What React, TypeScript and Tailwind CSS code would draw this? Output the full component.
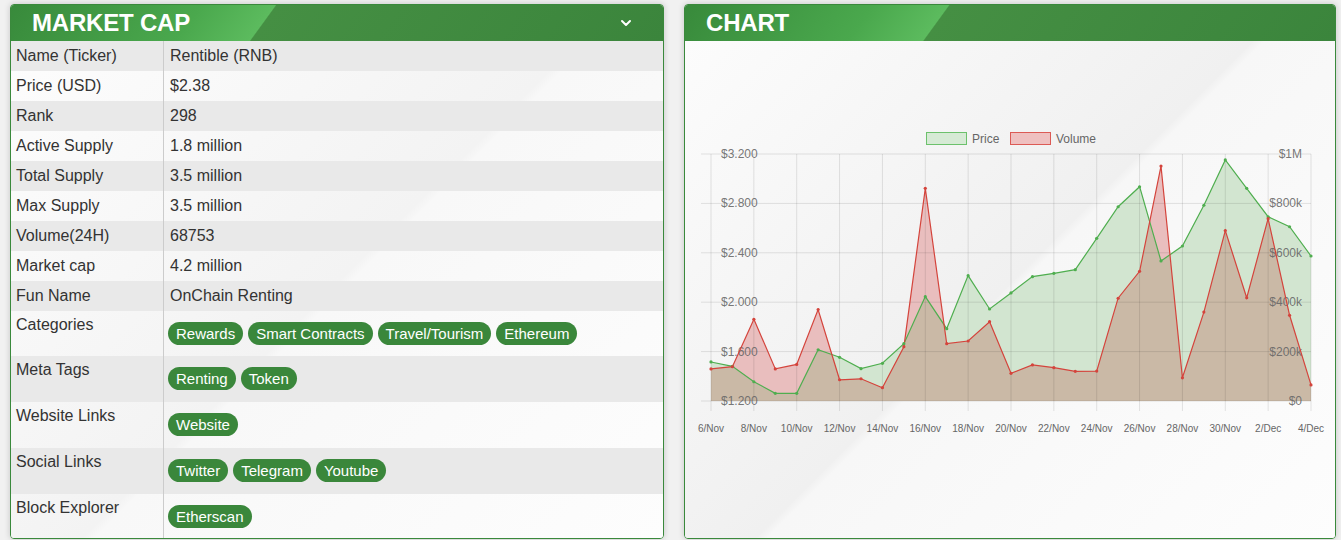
import React from 'react';
import { ChevronDown } from 'lucide-react';

// Filas de la tabla de market cap
const rows: { label: string; value: string }[] = [
    { label: 'Name (Ticker)', value: 'Rentible (RNB)' },
    { label: 'Price (USD)', value: '$2.38' },
    { label: 'Rank', value: '298' },
    { label: 'Active Supply', value: '1.8 million' },
    { label: 'Total Supply', value: '3.5 million' },
    { label: 'Max Supply', value: '3.5 million' },
    { label: 'Volume(24H)', value: '68753' },
    { label: 'Market cap', value: '4.2 million' },
    { label: 'Fun Name', value: 'OnChain Renting' },
];

const tagRows: { label: string; tags: string[]; h: string }[] = [
    { label: 'Categories', tags: ['Rewards', 'Smart Contracts', 'Travel/Tourism', 'Ethereum'], h: 'h-[45px]' },
    { label: 'Meta Tags', tags: ['Renting', 'Token'], h: 'h-[46px]' },
    { label: 'Website Links', tags: ['Website'], h: 'h-[46px]' },
    { label: 'Social Links', tags: ['Twitter', 'Telegram', 'Youtube'], h: 'h-[46px]' },
    { label: 'Block Explorer', tags: ['Etherscan'], h: 'flex-1' },
];

// Datos del gráfico (6/Nov -> 4/Dec)
const price = [1.516, 1.481, 1.356, 1.262, 1.262, 1.615, 1.554, 1.462, 1.505, 1.664, 2.045, 1.786, 2.215, 1.945, 2.075, 2.207, 2.234, 2.263, 2.517, 2.773, 2.935, 2.334, 2.455, 2.785, 3.152, 2.922, 2.692, 2.611, 2.374];
const volume = [130, 139, 331, 130, 148, 370, 86, 90, 54, 220, 861, 232, 243, 321, 112, 146, 135, 120, 121, 416, 525, 951, 94, 360, 690, 418, 738, 347, 65];
const xLabels = ['6/Nov', '8/Nov', '10/Nov', '12/Nov', '14/Nov', '16/Nov', '18/Nov', '20/Nov', '22/Nov', '24/Nov', '26/Nov', '28/Nov', '30/Nov', '2/Dec', '4/Dec'];
const leftTicks = ['$3.200', '$2.800', '$2.400', '$2.000', '$1.600', '$1.200'];
const rightTicks = ['$1M', '$800k', '$600k', '$400k', '$200k', '$0'];

const X0 = 711;
const X1 = 1311;
const Y_TOP = 154;
const Y_BOT = 401;
const step = (X1 - X0) / 28;
const px = (i: number) => X0 + i * step;
const pyPrice = (p: number) => Y_BOT - ((p - 1.2) / 2) * (Y_BOT - Y_TOP);
const pyVol = (v: number) => Y_BOT - (v / 1000) * (Y_BOT - Y_TOP);

const pricePts = price.map((p, i) => [px(i), pyPrice(p)] as const);
const volPts = volume.map((v, i) => [px(i), pyVol(v)] as const);
const toLine = (pts: readonly (readonly [number, number])[]) => pts.map(([x, y]) => `${x.toFixed(1)},${y.toFixed(1)}`).join(' ');
const toArea = (pts: readonly (readonly [number, number])[]) => `${toLine(pts)} ${X1},${Y_BOT} ${X0},${Y_BOT}`;

function Header({ title, chevron }: { title: string; chevron?: boolean }) {
    return (
        <div className="h-[36px] flex items-center justify-between pl-[21px] pr-[29px] bg-[linear-gradient(126deg,#388a3b_0%,#4aa84d_28%,#5cbb5e_39%,#458f43_39.2%,#3b853c_100%)]">
            <span className="text-white font-bold text-[24px] leading-none tracking-[-0.2px]">{title}</span>
            {chevron && <ChevronDown className="w-[16px] h-[16px] text-white" strokeWidth={3} />}
        </div>
    );
}

function MarketCapPanel() {
    return (
        <div className="w-[654px] h-[535px] flex flex-col border border-[#3a893c] rounded-[4px] overflow-hidden shadow-[0_0_6px_rgba(0,0,0,0.18)]">
            <Header title="MARKET CAP" chevron />
            <div className="flex-1 flex flex-col text-[16px] text-[#333] bg-[linear-gradient(135deg,#fdfdfd_0%,#f3f3f3_49.5%,#f8f8f8_50.5%,#fdfdfd_100%)]">
                {rows.map((r, i) => (
                    <div key={r.label} className={`flex h-[30px] ${i % 2 === 0 ? 'bg-[#e9e9e9]' : ''}`}>
                        <div className="w-[153px] shrink-0 border-r border-[#cccccc] pl-[5px] leading-[30px]">{r.label}</div>
                        <div className="pl-[6px] leading-[30px]">{r.value}</div>
                    </div>
                ))}
                {tagRows.map((r, i) => (
                    <div key={r.label} className={`flex ${r.h} ${i % 2 === 1 ? 'bg-[#e9e9e9]' : ''}`}>
                        <div className="w-[153px] shrink-0 border-r border-[#cccccc] pl-[5px] pt-[5px] leading-[18px]">{r.label}</div>
                        <div className="flex flex-wrap gap-[5px] pl-[4px] pt-[11px]">
                            {r.tags.map((t) => (
                                <span key={t} className="h-[23px] px-[8px] rounded-full bg-[#3a873b] text-white text-[15px] leading-[23px]">{t}</span>
                            ))}
                        </div>
                    </div>
                ))}
            </div>
        </div>
    );
}

function ChartPanel() {
    const gridYs = leftTicks.map((_, k) => Y_TOP + k * ((Y_BOT - Y_TOP) / 5));
    return (
        <div className="w-[652px] h-[535px] flex flex-col border border-[#3a893c] rounded-[4px] overflow-hidden shadow-[0_0_6px_rgba(0,0,0,0.18)]">
            <Header title="CHART" />
            <div className="flex-1 bg-[linear-gradient(135deg,#fcfcfc_0%,#f0f0f0_49.5%,#f7f7f7_50.5%,#fdfdfd_100%)]">
                <svg width="650" height="497" viewBox="685 41 650 497" className="block" fontFamily="'Liberation Sans', Arial, sans-serif">
                    <defs>
                        <clipPath id="priceClip">
                            <polygon points={toArea(pricePts)} />
                        </clipPath>
                    </defs>

                    {/* leyenda */}
                    <rect x="926.5" y="132.5" width="40" height="12" fill="#d6ead5" stroke="#6cc16c" strokeWidth="1" />
                    <text x="972" y="142.5" fontSize="12" fill="#666">Price</text>
                    <rect x="1010.5" y="132.5" width="40" height="12" fill="#efc0c0" stroke="#dc5a55" strokeWidth="1" />
                    <text x="1056" y="142.5" fontSize="12" fill="#666">Volume</text>

                    {/* áreas */}
                    <polygon points={toArea(pricePts)} fill="#d2e5d0" />
                    <polygon points={toArea(volPts)} fill="#e9bebe" />
                    <polygon points={toArea(volPts)} fill="#cab9a6" clipPath="url(#priceClip)" />

                    {/* rejilla */}
                    {gridYs.map((y) => (
                        <line key={y} x1={701} x2={X1} y1={y} y2={y} stroke="rgba(0,0,0,0.1)" strokeWidth="1" />
                    ))}
                    {xLabels.map((_, k) => (
                        <line key={k} x1={px(k * 2)} x2={px(k * 2)} y1={Y_TOP} y2={411} stroke="rgba(0,0,0,0.1)" strokeWidth="1" />
                    ))}

                    {/* ejes */}
                    {leftTicks.map((t, k) => (
                        <text key={t} x="721" y={gridYs[k] + 4} fontSize="12" fill="#666" fillOpacity="0.9">{t}</text>
                    ))}
                    {rightTicks.map((t, k) => (
                        <text key={t} x="1302" y={gridYs[k] + 4} fontSize="12" fill="#666" fillOpacity="0.9" textAnchor="end">{t}</text>
                    ))}
                    {xLabels.map((t, k) => (
                        <text key={t} x={px(k * 2)} y="432" fontSize="10" fill="#666" textAnchor="middle">{t}</text>
                    ))}

                    {/* líneas */}
                    <polyline points={toLine(pricePts)} fill="none" stroke="#4fae4f" strokeWidth="1.2" />
                    <polyline points={toLine(volPts)} fill="none" stroke="#d4443c" strokeWidth="1.2" />
                    {pricePts.map(([x, y], i) => (
                        <circle key={`p${i}`} cx={x} cy={y} r="1.6" fill="#4fae4f" />
                    ))}
                    {volPts.map(([x, y], i) => (
                        <circle key={`v${i}`} cx={x} cy={y} r="1.6" fill="#d4443c" />
                    ))}
                </svg>
            </div>
        </div>
    );
}

export default function App() {
    return (
        <div className="min-h-[540px] bg-[#f1f1f1] flex gap-[20px] pl-[10px] pt-[4px] font-['Liberation_Sans',Arial,sans-serif]">
            <MarketCapPanel />
            <ChartPanel />
        </div>
    );
}
